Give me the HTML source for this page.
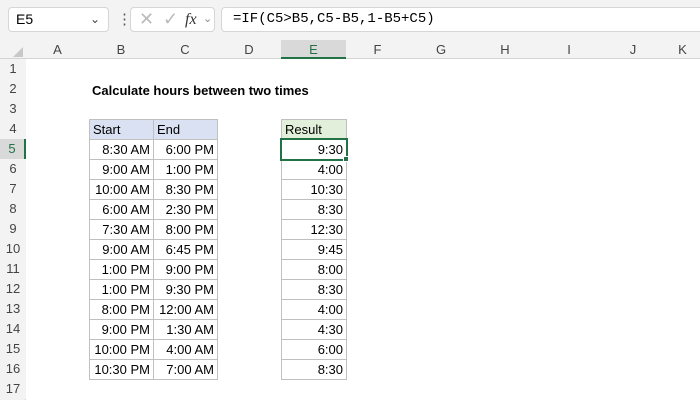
<!DOCTYPE html>
<html><head><style>
body{margin:0;width:700px;height:400px;overflow:hidden;background:#fff;font-family:"Liberation Sans",Calibri,sans-serif;position:relative}
.a{position:absolute;box-sizing:border-box}
.top{left:0;top:0;width:700px;height:40px;background:#f3f3f3}
.box{background:#fff;border:1px solid #d6d6d6;border-radius:4px;height:25px;top:7px;font-size:14px;line-height:23px}
.ch{top:40px;height:19px;background:#f3f3f3;border-bottom:1px solid #d4d4d4;font-size:13px;color:#444;text-align:center;line-height:19px}
.rh{left:0;width:26px;background:#f3f3f3;font-size:13px;color:#444;text-align:center;line-height:20px;height:20px}
.c{height:21px;width:65px;border:1px solid #c0c0c0;font-size:13px;line-height:19px;padding:0 3px;text-align:right;color:#000}
</style></head><body>
<div class="a top"></div>
<div class="a box" style="left:8px;width:101px;padding-left:7px">E5<span style="position:absolute;right:8px;top:0;font-size:12px;color:#444">&#8964;</span></div>
<div class="a" style="left:117px;top:12px;font-size:15px;color:#555;line-height:15px">&#8942;</div>
<div class="a box" style="left:130px;width:85px;color:#bbb">
<span style="position:absolute;left:8px;top:0;font-size:18px">&#10005;</span>
<span style="position:absolute;left:32px;top:0;font-size:18px">&#10003;</span>
<span style="position:absolute;left:54px;top:0;font-family:'Liberation Serif',serif;font-style:italic;color:#333;font-size:16px">fx</span>
<span style="position:absolute;left:72px;top:0;font-size:11px;color:#888">&#8964;</span></div>
<div class="a box" style="left:221px;width:485px;padding-left:11px;font-family:'Liberation Mono',monospace;font-size:14px">=IF(C5&gt;B5,C5-B5,1-B5+C5)</div>
<div class="a ch" style="left:0;width:26px"></div>
<svg class="a" style="left:12px;top:46px" width="12" height="12"><polygon points="11,1 11,11 1,11" fill="#c8c8c8"/></svg>
<div class="a ch" style="left:26px;width:63px">A</div>
<div class="a ch" style="left:89px;width:64px">B</div>
<div class="a ch" style="left:153px;width:64px">C</div>
<div class="a ch" style="left:217px;width:64px">D</div>
<div class="a ch" style="left:281px;width:65px;background:#d9d9d9;border-bottom:2px solid #217346;color:#217346">E</div>
<div class="a ch" style="left:346px;width:63px">F</div>
<div class="a ch" style="left:409px;width:64px">G</div>
<div class="a ch" style="left:473px;width:64px">H</div>
<div class="a ch" style="left:537px;width:64px">I</div>
<div class="a ch" style="left:601px;width:64px">J</div>
<div class="a ch" style="left:665px;width:35px">K</div>
<div class="a" style="left:0;top:59px;width:26px;height:341px;background:#f3f3f3;border-right:1px solid #d4d4d4"></div>
<div id="rows"></div>
<div class="a" style="left:92px;top:81px;font-size:13px;font-weight:bold;line-height:20px">Calculate hours between two times</div>
<div id="cells"></div>
<script>
var r='',i;
for(i=1;i<=17;i++){var t=59+(i-1)*20;r+='<div class="a rh" style="top:'+t+'px;'+(i==5?'background:#d9d9d9;color:#217346;border-right:2px solid #217346':'')+'">'+i+'</div>';}
document.getElementById('rows').innerHTML=r;
var B=['8:30 AM','9:00 AM','10:00 AM','6:00 AM','7:30 AM','9:00 AM','1:00 PM','1:00 PM','8:00 PM','9:00 PM','10:00 PM','10:30 PM'];
var C=['6:00 PM','1:00 PM','8:30 PM','2:30 PM','8:00 PM','6:45 PM','9:00 PM','9:30 PM','12:00 AM','1:30 AM','4:00 AM','7:00 AM'];
var E=['9:30','4:00','10:30','8:30','12:30','9:45','8:00','8:30','4:00','4:30','6:00','8:30'];
var s='';
s+='<div class="a c" style="left:89px;top:119px;background:#d9e1f2;text-align:left">Start</div>';
s+='<div class="a c" style="left:153px;top:119px;background:#d9e1f2;text-align:left">End</div>';
s+='<div class="a c" style="left:281px;top:119px;width:66px;background:#e2efda;text-align:left">Result</div>';
for(i=0;i<12;i++){var t=139+i*20;
s+='<div class="a c" style="left:89px;top:'+t+'px">'+B[i]+'</div>';
s+='<div class="a c" style="left:153px;top:'+t+'px">'+C[i]+'</div>';
s+='<div class="a c" style="left:281px;top:'+t+'px;width:66px">'+E[i]+'</div>';}
s+='<div class="a" style="left:280px;top:138px;width:68px;height:23px;border:2px solid #217346"></div>';
s+='<div class="a" style="left:343px;top:156px;width:6px;height:6px;background:#217346;border:1px solid #fff"></div>';
document.getElementById('cells').innerHTML=s;
</script>
</body></html>
